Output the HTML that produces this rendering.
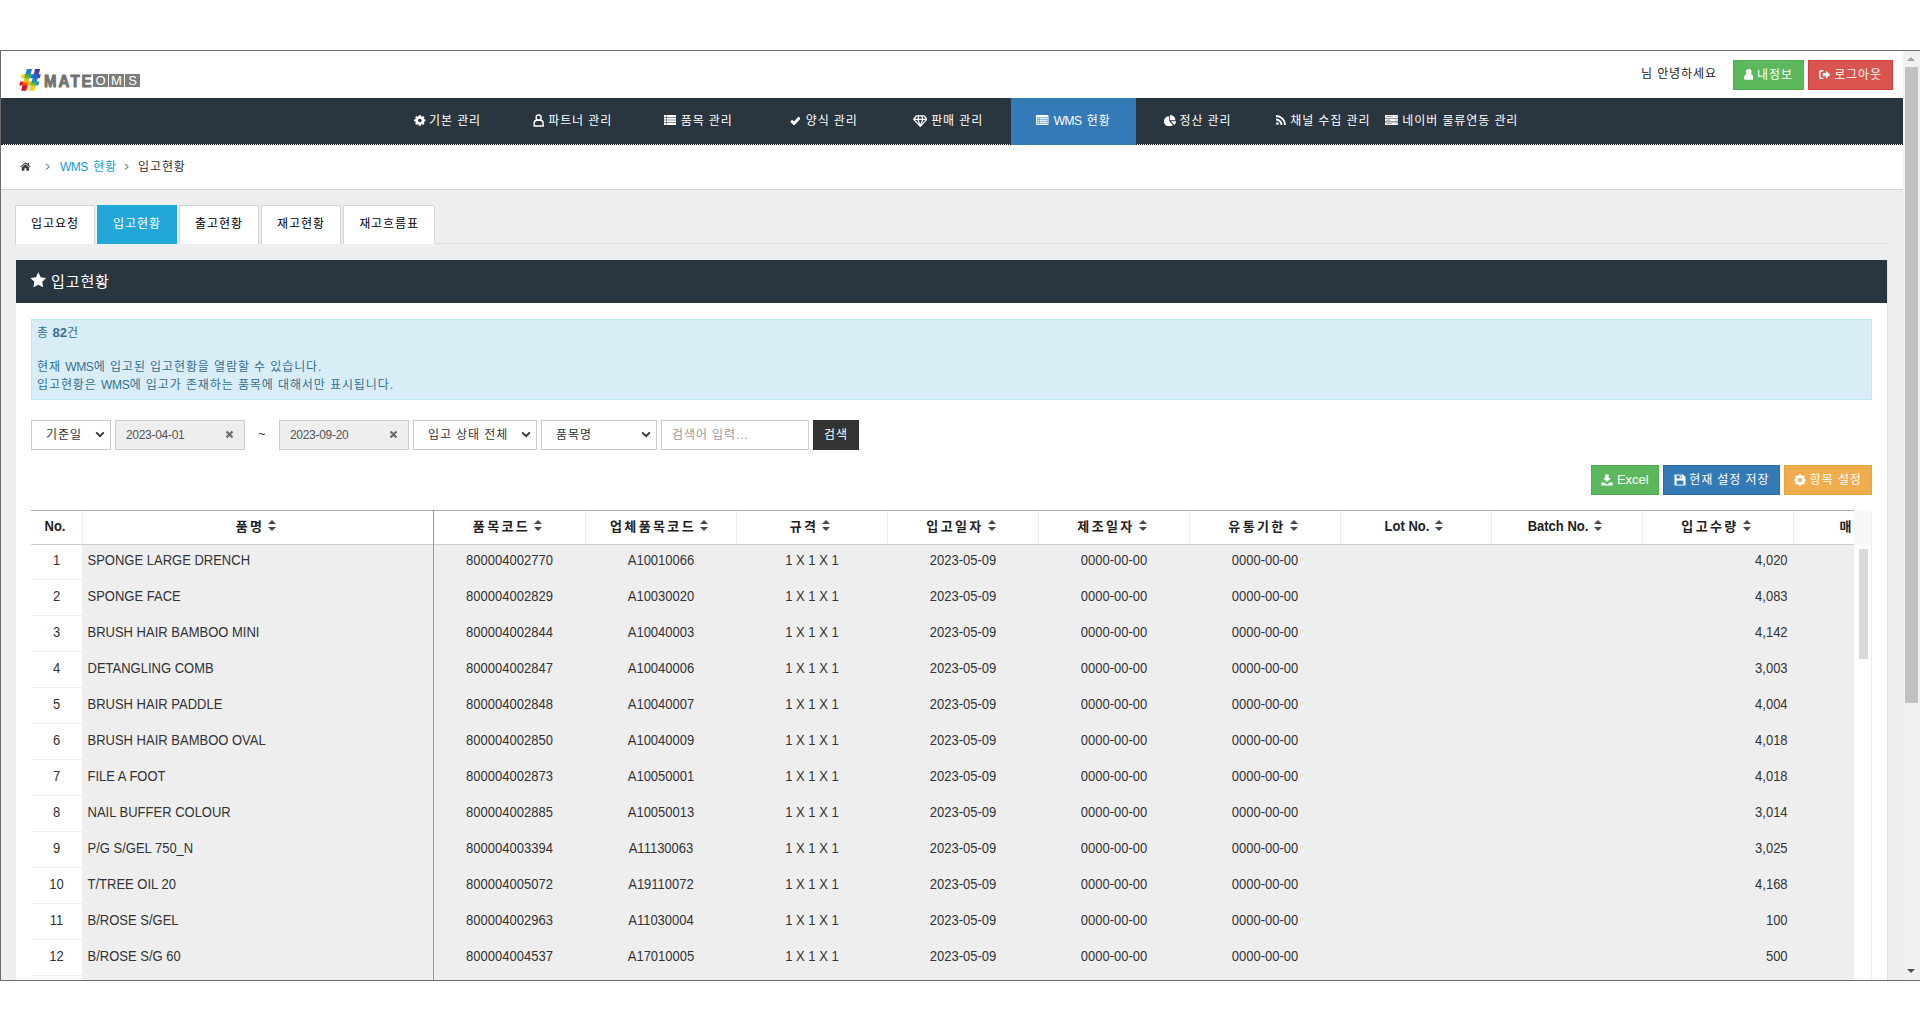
<!DOCTYPE html>
<html lang="ko">
<head>
<meta charset="utf-8">
<title>MATE OMS - 입고현황</title>
<style>
*{box-sizing:border-box;}
html,body{margin:0;padding:0;}
body{width:1920px;height:1031px;background:#fff;position:relative;overflow:hidden;
 font-family:"Liberation Sans","Noto Sans CJK KR",sans-serif;font-size:13px;color:#333;}
.k{font-family:"Liberation Sans","Noto Sans CJK KR",sans-serif;font-weight:400;font-size:12px;letter-spacing:0.9px;}
.k.k15{font-size:15px;letter-spacing:0.9px;}
#frame{position:absolute;left:0;top:50px;width:1920px;height:931px;border:1px solid #6b6b6b;border-right:0;background:#eee;overflow:hidden;}
#page{position:absolute;left:0;top:0;width:1902px;height:929px;background:#eee;overflow:hidden;}
#vsb{position:absolute;left:1902px;top:0;width:17px;height:929px;background:#f1f1f1;}
#vsb .thumb{position:absolute;left:2px;top:16px;width:13px;height:636px;background:#c1c1c1;}
#vsb .up,#vsb .dn{position:absolute;left:4px;width:0;height:0;border-left:4px solid transparent;border-right:4px solid transparent;}
#vsb .up{top:6px;border-bottom:4px solid #a3a3a3;}
#vsb .dn{top:918px;border-top:4px solid #505050;}
.abs{position:absolute;}
/* header */
#hdr{position:absolute;left:0;top:0;width:1902px;height:47px;background:#fff;}
#nav{position:absolute;left:0;top:47px;width:1902px;height:47px;background:#2a363f;background-clip:padding-box;border-bottom:1px dotted #111;}
#nav ul{list-style:none;margin:0;padding:0;position:absolute;left:385px;top:0;height:46px;white-space:nowrap;}
#nav li{float:left;position:relative;width:125px;height:46px;line-height:46px;text-align:left;color:#fff;font-size:13px;white-space:nowrap;}
#nav li.on{background:#337ab7;height:47px;}
#nav li.last{width:132px;}
#nav svg.ni{position:absolute;}
#nav .nt{position:absolute;top:0;white-space:nowrap;}
#bc{position:absolute;left:0;top:94px;width:1902px;height:45px;background:#fff;border-bottom:1px solid #d6d6d6;}
.btn{position:absolute;height:30px;line-height:30px;color:#fff;font-size:13px;text-align:center;white-space:nowrap;margin:0;padding:0;border:0;border-radius:0;font-family:inherit;display:block;}
.btn svg{vertical-align:middle;position:relative;top:-1px;}
/* tabs */
.tab{position:absolute;top:154px;height:39px;line-height:36px;border:1px solid #d4d4d4;border-bottom:0;border-radius:2px 2px 0 0;background:#fff;color:#000;text-align:center;font-size:13px;}
.tab.on{background:#22a7d8;border-color:#22a7d8;color:#fff;box-shadow:0 0 0 1px #e6f7fc;border-radius:0;}
#tabline{position:absolute;left:15px;top:192px;width:1871px;height:1px;background:#ddd;}
#panel{position:absolute;left:15px;top:209px;width:1872px;height:760px;background:#fff;border-right:1px solid #e3e3e3;}
#phead{position:absolute;left:0;top:0;width:1871px;height:43px;background:#2a363f;color:#fff;font-size:16px;line-height:43px;}
#info{position:absolute;left:15px;top:59px;width:1841px;height:81px;background:#d9edf7;border:1px solid #bce8f1;color:#31708f;font-size:13px;}
.fld{position:absolute;top:160px;height:30px;border:1px solid #ccc;background:#fff;font-size:12px;letter-spacing:-0.3px;line-height:28px;color:#333;white-space:nowrap;}
.fld.dis{background:#eee;color:#555;}

.oms{width:15px;height:13px;line-height:14px;background:#7d7d7d;color:#fff;font-size:13px;overflow:hidden;text-align:center;font-family:"Liberation Sans",sans-serif;}
#tbl{position:absolute;left:15px;top:250px;width:1841px;height:520px;overflow:hidden;background:#fff;}
#thead{position:absolute;left:0;top:0;width:1823px;height:35px;border-top:1px solid #aaa;border-bottom:1px solid #ccc;background:#fff;overflow:hidden;}
.th{position:absolute;top:0;height:33px;line-height:32px;padding-right:3px;overflow:hidden;text-align:center;font-weight:bold;font-size:13px;color:#222;border-right:1px solid #eee;white-space:nowrap;}
.kb{font-family:"Liberation Sans","Noto Sans CJK KR",sans-serif;font-weight:bold;letter-spacing:2.4px;margin-right:-2px;}
.t.kb{transform:none;}
.sort{display:inline-block;position:relative;width:8px;height:12px;margin-left:6px;margin-right:1px;vertical-align:middle;top:-2px}
.sort i{position:absolute;left:0;top:0.5px;border-left:4px solid transparent;border-right:4px solid transparent;border-bottom:4.5px solid #4a4a4a;}
.sort b{position:absolute;left:0;top:7.5px;border-left:4px solid transparent;border-right:4px solid transparent;border-top:4.5px solid #4a4a4a;}
#tbody{position:absolute;left:0;top:35px;width:1823px;height:485px;overflow:hidden;background:#eee;}
.tr{position:absolute;left:0;width:1913px;height:36px;}
.td{position:absolute;top:0;height:36px;line-height:31px;padding-right:1px;text-align:center;font-size:13px;color:#333;white-space:nowrap;overflow:hidden;}
.td.no{background:#fff;padding-right:0;}
.td.no::after{content:"";position:absolute;left:1px;right:0;top:34px;height:1px;background:#efefef;}
.td.nm{text-align:left;padding-left:5.5px;}
.t{display:inline-block;transform:scaleY(1.075);transform-origin:50% 62%;}
.td.q{text-align:right;padding-right:6.4px;}
#vline{position:absolute;left:402px;top:0;width:1px;height:520px;background:#999;}
#isb{position:absolute;left:1823px;top:35px;width:17px;height:485px;background:#fff;}
#isbh{position:absolute;left:1823px;top:0;width:17px;height:35px;background:#f8f8f8;}
#tbl{border-right:1px solid #eee;}
#isb div{position:absolute;left:5px;top:4px;width:9px;height:110px;background:#dadada;}
.g{font-size:12px;letter-spacing:-0.5px;margin-right:1px;}
#info .g{font-size:12px;letter-spacing:-0.3px;margin-right:0.3px;}
.gt{display:inline-block;transform:scaleX(0.58);font-size:12px;color:#666;}
.fld input{position:absolute;left:0;top:0;width:100%;height:28px;margin:0;border:0;outline:0;background:transparent;padding:0 0 0 10px;line-height:28px;color:inherit;border-radius:0;}
.fld input.din{font-family:"Liberation Sans","Noto Sans CJK KR",sans-serif;font-size:12px;letter-spacing:-0.3px;}
.fld input.sin::placeholder{color:#999;opacity:1;}
#nav a{color:#fff;text-decoration:none;}
</style>
</head>
<body>
<div id="frame">
<div id="page">
<div id="hdr">
<div class="abs" style="left:18px;top:17px;width:23px;height:24px" role="img" aria-label="#"><svg width="23" height="24" viewBox="0 0 23 24" style=""><defs><linearGradient id="gl" x1="0" y1="0" x2="0" y2="1"><stop offset="0" stop-color="#0d7fd0"/><stop offset="0.2" stop-color="#1787cf"/><stop offset="0.3" stop-color="#55ad33"/><stop offset="0.42" stop-color="#79b82a"/><stop offset="0.5" stop-color="#fbd315"/><stop offset="0.6" stop-color="#f9a51a"/><stop offset="0.7" stop-color="#ee5a1e"/><stop offset="0.8" stop-color="#e2101e"/><stop offset="1" stop-color="#e3061f"/></linearGradient><linearGradient id="gr" x1="0" y1="0" x2="0" y2="1"><stop offset="0" stop-color="#46308f"/><stop offset="0.22" stop-color="#5a3fa8"/><stop offset="0.3" stop-color="#1467c4"/><stop offset="0.55" stop-color="#0e8ccc"/><stop offset="0.66" stop-color="#5fb234"/><stop offset="0.76" stop-color="#a8c526"/><stop offset="0.82" stop-color="#fcd813"/><stop offset="1" stop-color="#fbd011"/></linearGradient><linearGradient id="gu" x1="0" y1="0" x2="1" y2="0"><stop offset="0" stop-color="#f9d71a"/><stop offset="0.15" stop-color="#f4d21c"/><stop offset="0.28" stop-color="#73b72c"/><stop offset="0.42" stop-color="#5fae33"/><stop offset="0.52" stop-color="#1488cf"/><stop offset="0.78" stop-color="#1960c0"/><stop offset="0.88" stop-color="#5a3da6"/><stop offset="1" stop-color="#5a3da6"/></linearGradient><linearGradient id="gd" x1="0" y1="0" x2="1" y2="0"><stop offset="0" stop-color="#e20a1f"/><stop offset="0.14" stop-color="#e31b1f"/><stop offset="0.26" stop-color="#f0641c"/><stop offset="0.38" stop-color="#f08a18"/><stop offset="0.48" stop-color="#fbd116"/><stop offset="0.6" stop-color="#8dbf29"/><stop offset="0.74" stop-color="#5cb035"/><stop offset="0.86" stop-color="#0f90c9"/><stop offset="1" stop-color="#0e86cd"/></linearGradient></defs><polygon points="2.7,6.2 21.9,6.2 20.9,10.2 1.7,10.2" fill="url(#gu)"/><polygon points="1.3,13.6 20.3,13.6 19.3,17.6 0.3,17.6" fill="url(#gd)"/><polygon points="7.9,1.1 13.0,1.1 7.2,22.7 2.1,22.7" fill="url(#gl)"/><polygon points="16.1,1.1 21.1,1.1 15.4,22.7 10.3,22.7" fill="url(#gr)"/></svg></div>
<div class="abs" style="left:42.5px;top:20.6px;height:18px;line-height:18px;font-size:16.4px;font-weight:bold;color:#727272;-webkit-text-stroke:1px #727272;letter-spacing:2.2px;transform:scaleX(0.92);transform-origin:0 50%;white-space:nowrap;font-family:'Liberation Sans',sans-serif">MATE</div>
<div class="abs oms" style="left:92px;top:23px;">O</div><div class="abs oms" style="left:108px;top:23px;">M</div><div class="abs oms" style="left:124px;top:23px;">S</div>
<div class="abs" style="left:1640px;top:14px;height:18px;line-height:18px;color:#222;white-space:nowrap"><span class="k">님 안녕하세요</span></div>
<button type="button" class="btn" style="left:1732px;top:9px;width:71px;background:#5cb85c;border:1px solid #4cae4c;line-height:27px"><svg width="9.4" height="10.8" viewBox="0 0 9.4 10.8" style=""><g fill="#fff"><circle cx="4.7" cy="2.9" r="2.8"/><path d="M0.2 10.8 V8.2 Q0.2 5.6 2.8 5.3 H6.6 Q9.2 5.6 9.2 8.2 V10.8 Z"/></g></svg> <span class="k">내정보</span></button>
<button type="button" class="btn" style="left:1807px;top:9px;width:85px;background:#d9534f;border:1px solid #d43f3a;line-height:27px"><svg width="11.5" height="9.4" viewBox="0 0 11.5 9.4" style=""><g fill="none" stroke="#fff" stroke-width="1.5"><path d="M4.3 0.8 H2.6 Q0.8 0.8 0.8 2.6 V6.8 Q0.8 8.6 2.6 8.6 H4.3"/></g><path d="M3.9 3.1 H7 V0.7 L11.3 4.7 L7 8.7 V6.3 H3.9 Z" fill="#fff"/></svg> <span class="k">로그아웃</span></button>
</div>
<div id="nav"><ul><li class=""><svg class="ni" style="left:28.20px;top:17.00px" width="11.60" height="10.90" viewBox="0 0 14 14" preserveAspectRatio="none"><g fill="#fff"><rect x="5.5" y="0.2" width="3" height="13.6" rx="0.7" transform="rotate(0 7 7)"/><rect x="5.5" y="0.2" width="3" height="13.6" rx="0.7" transform="rotate(45 7 7)"/><rect x="5.5" y="0.2" width="3" height="13.6" rx="0.7" transform="rotate(90 7 7)"/><rect x="5.5" y="0.2" width="3" height="13.6" rx="0.7" transform="rotate(135 7 7)"/><circle cx="7" cy="7" r="5.3"/></g><circle cx="7" cy="7" r="2.1" fill="none" stroke="#000" stroke-opacity="0" /><circle fill="#2a363f" cx="7" cy="7" r="2.2"/></svg><a class="k nt" style="left:43.05px">기본 관리</a></li><li class=""><svg class="ni" style="left:22.30px;top:16.20px" width="11.30" height="12.90" viewBox="0 0 12 13" preserveAspectRatio="none"><g fill="none" stroke="#fff" stroke-width="1.5"><circle cx="6" cy="3.6" r="2.7"/><path d="M1.2 12.2 V9.6 Q1.2 6.6 4 6.4 H8 Q10.8 6.6 10.8 9.6 V12.2 Z" stroke-linejoin="round"/></g></svg><a class="k nt" style="left:37.20px">파트너 관리</a></li><li class=""><svg class="ni" style="left:28.00px;top:17.20px" width="12.25" height="10.00" viewBox="0 0 12.25 10" preserveAspectRatio="none"><g fill="#fff"><rect x="0" y="0" width="12.25" height="2.1"/><rect x="0" y="2.63" width="12.25" height="2.1"/><rect x="0" y="5.26" width="12.25" height="2.1"/><rect x="0" y="7.9" width="12.25" height="2.1"/></g><rect x="2.3" y="0" width="0.55" height="10" fill="#2a363f" opacity="0.75"/></svg><a class="k nt" style="left:44.70px">품목 관리</a></li><li class=""><svg class="ni" style="left:28.60px;top:18.40px" width="10.80" height="9.00" viewBox="0 0 11 9" preserveAspectRatio="none"><path d="M1.2 4.7 L4.2 7.5 L9.8 1.5" fill="none" stroke="#fff" stroke-width="2.9"/></svg><a class="k nt" style="left:44.70px">양식 관리</a></li><li class=""><svg class="ni" style="left:26.90px;top:16.80px" width="14.60" height="12.00" viewBox="0 0 14 12" preserveAspectRatio="none"><g fill="none" stroke="#fff" stroke-width="1.2" stroke-linejoin="round"><path d="M3.2 0.8 H10.8 L13.3 4.3 L7 11.3 L0.7 4.3 Z"/><path d="M0.7 4.3 H13.3 M4.6 4.3 L7 11 L9.4 4.3 M4.6 4.3 L5.6 0.8 M9.4 4.3 L8.4 0.8"/></g></svg><a class="k nt" style="left:45.15px">판매 관리</a></li><li class="on"><svg class="ni" style="left:25.25px;top:17.00px" width="12.50" height="10.00" viewBox="0 0 12.5 10" preserveAspectRatio="none"><rect x="0" y="0" width="12.5" height="10" rx="1.1" fill="#fff"/><rect x="0.9" y="2.2" width="10.7" height="6.9" fill="#6ea3d6"/><g fill="#e6f0fa"><rect x="1.7" y="3" width="1.4" height="1.3"/><rect x="3.9" y="3" width="6.9" height="1.3"/><rect x="1.7" y="5" width="1.4" height="1.3"/><rect x="3.9" y="5" width="6.9" height="1.3"/><rect x="1.7" y="7" width="1.4" height="1.3"/><rect x="3.9" y="7" width="6.9" height="1.3"/></g></svg><a class="k nt" style="left:42.65px"><span class="g">WMS</span> 현황</a></li><li class=""><svg class="ni" style="left:27.75px;top:16.60px" width="12.05" height="11.40" viewBox="0 0 12 11.4" preserveAspectRatio="none"><g fill="#fff"><path d="M5.2 1.2 V6.3 L8.8 9.9 A5.15 5.15 0 1 1 5.2 1.2 Z"/><path d="M6.1 0 A5.3 5.3 0 0 1 11.4 5.3 H6.1 Z"/><path d="M6.7 6.2 H12 A5.3 5.3 0 0 1 10.4 9.9 Z"/></g></svg><a class="k nt" style="left:43.45px">정산 관리</a></li><li class=""><svg class="ni" style="left:14.80px;top:17.20px" width="10.00" height="10.00" viewBox="0 0 10 10" preserveAspectRatio="none"><g fill="none" stroke="#fff" stroke-width="1.9"><path d="M0 0.95 A9.05 9.05 0 0 1 9.05 10"/><path d="M0 4.5 A5.5 5.5 0 0 1 5.5 10"/></g><circle cx="1.4" cy="8.6" r="1.4" fill="#fff"/></svg><a class="k nt" style="left:29.25px">채널 수집 관리</a></li><li class="last"><svg class="ni" style="left:-1.00px;top:17.00px" width="12.90" height="10.20" viewBox="0 0 13 10.2" preserveAspectRatio="none"><g fill="#fff"><rect x="0" y="0" width="13" height="3" rx="0.6"/><rect x="0" y="3.6" width="13" height="3" rx="0.6"/><rect x="0" y="7.2" width="13" height="3" rx="0.6"/></g><g fill="#2a363f" opacity="0.55"><rect x="1" y="1.1" width="7" height="0.8"/><rect x="10.3" y="1.1" width="1.4" height="0.8"/><rect x="1" y="4.7" width="5" height="0.8"/><rect x="10.3" y="4.7" width="1.4" height="0.8"/><rect x="1" y="8.3" width="6" height="0.8"/><rect x="10.3" y="8.3" width="1.4" height="0.8"/></g></svg><a class="k nt" style="left:16.35px">네이버 물류연동 관리</a></li></ul></div>
<div id="bc">
<div class="abs" style="left:19.2px;top:17.2px;line-height:0"><svg preserveAspectRatio="none" width="10.8" height="8.9" viewBox="0 0.4 12 10.3" style=""><g fill="#3d3d3d"><path d="M6 0.6 L0.2 5.6 L0.9 6.4 L6 2.1 L11.1 6.4 L11.8 5.6 L9.9 4 V1.2 H8.5 V2.7 Z"/><path d="M6 3.1 L1.9 6.5 V10.6 H4.9 V7.6 H7.1 V10.6 H10.1 V6.5 Z"/></g></svg></div>
<div class="abs" style="left:43px;top:13px;line-height:18px;color:#555;font-size:12px"><span class="gt">&gt;</span></div>
<div class="abs" style="left:59px;top:13px;line-height:18px;color:#2399cb;white-space:nowrap"><span class="k"><span class="g">WMS</span> 현황</span></div>
<div class="abs" style="left:122px;top:13px;line-height:18px;color:#555;font-size:12px"><span class="gt">&gt;</span></div>
<div class="abs" style="left:137px;top:13px;line-height:18px;color:#333;white-space:nowrap"><span class="k">입고현황</span></div>
</div>
<div id="tabline"></div><div class="tab " style="left:14px;width:80px"><span class="k">입고요청</span></div><div class="tab on" style="left:96px;width:80px"><span class="k">입고현황</span></div><div class="tab " style="left:178px;width:80px"><span class="k">출고현황</span></div><div class="tab " style="left:260px;width:80px"><span class="k">재고현황</span></div><div class="tab " style="left:342px;width:92px"><span class="k">재고흐름표</span></div>
<div id="panel">
<div id="phead"><span class="abs" style="left:14.3px;top:0"><svg width="16.6" height="15.6" viewBox="0 0 16 15" style="vertical-align:middle;position:relative;top:-3px"><path d="M8 0.3 L10.3 5.1 L15.6 5.8 L11.8 9.5 L12.7 14.7 L8 12.2 L3.3 14.7 L4.2 9.5 L0.4 5.8 L5.7 5.1 Z" fill="#fff"/></svg></span><span class="k k15 abs" style="left:35px;top:0;white-space:nowrap">입고현황</span></div>
<div id="info">
<div class="abs" style="left:5px;top:4px;line-height:18px;white-space:nowrap"><span class="k">총</span> <b>82</b><span class="k">건</span></div>
<div class="abs" style="left:5px;top:38px;line-height:18px;white-space:nowrap"><span class="k">현재 <span class="g">WMS</span>에 입고된 입고현황을 열람할 수 있습니다.</span></div>
<div class="abs" style="left:5px;top:56px;line-height:18px;white-space:nowrap"><span class="k">입고현황은 <span class="g">WMS</span>에 입고가 존재하는 품목에 대해서만 표시됩니다.</span></div>
</div>
<div class="fld" role="combobox" aria-label="기준일" style="left:15px;width:80px"><span class="k" style="position:absolute;left:14px;top:0">기준일</span><span style="position:absolute;right:5px;top:-1px"><svg width="10" height="7" viewBox="0 0 10 7" style=""><path d="M1.2 1.4 L5 5.2 L8.8 1.4" stroke="#333" stroke-width="1.9" fill="none"/></svg></span></div>
<div class="fld dis" style="left:99px;width:130px"><input class="din" type="text" readonly value="2023-04-01"><span style="position:absolute;right:10px;top:0px"><svg width="9" height="9" viewBox="0 0 9 9" style=""><path d="M1.5 1.5 L7.5 7.5 M7.5 1.5 L1.5 7.5" stroke="#6a6a6a" stroke-width="2.2" fill="none"/></svg></span></div>
<div class="abs" style="left:242px;top:160px;height:30px;line-height:28px;color:#333">~</div>
<div class="fld dis" style="left:263px;width:130px"><input class="din" type="text" readonly value="2023-09-20"><span style="position:absolute;right:10px;top:0px"><svg width="9" height="9" viewBox="0 0 9 9" style=""><path d="M1.5 1.5 L7.5 7.5 M7.5 1.5 L1.5 7.5" stroke="#6a6a6a" stroke-width="2.2" fill="none"/></svg></span></div>
<div class="fld" role="combobox" aria-label="입고 상태 전체" style="left:397px;width:124px"><span class="k" style="position:absolute;left:14px;top:0">입고 상태 전체</span><span style="position:absolute;right:5px;top:-1px"><svg width="10" height="7" viewBox="0 0 10 7" style=""><path d="M1.2 1.4 L5 5.2 L8.8 1.4" stroke="#333" stroke-width="1.9" fill="none"/></svg></span></div>
<div class="fld" role="combobox" aria-label="품목명" style="left:525px;width:116px"><span class="k" style="position:absolute;left:14px;top:0">품목명</span><span style="position:absolute;right:5px;top:-1px"><svg width="10" height="7" viewBox="0 0 10 7" style=""><path d="M1.2 1.4 L5 5.2 L8.8 1.4" stroke="#333" stroke-width="1.9" fill="none"/></svg></span></div>
<div class="fld" style="left:645px;width:148px"><input class="k sin" type="text" placeholder="검색어 입력..."></div>
<button type="button" class="btn" style="left:797px;top:160px;width:46px;background:#333"><span class="k">검색</span></button>
<button type="button" class="btn" style="left:1575px;top:205px;width:68px;background:#5cb85c;border:1px solid #4cae4c;line-height:28px"><svg width="12" height="12" viewBox="0 0 12 12" style=""><g fill="#fff"><path d="M4.3 0.4 H7.7 V4 H10 L6 8 L2 4 H4.3 Z"/><path d="M0.3 8.4 H3.4 L4.8 9.8 Q6 10.9 7.2 9.8 L8.6 8.4 H11.7 V11.6 H0.3 Z"/></g></svg> Excel</button>
<button type="button" class="btn" style="left:1647px;top:205px;width:117px;background:#337ab7;border:1px solid #2e6da4;line-height:28px"><svg width="12" height="12" viewBox="0 0 12 12" style=""><path d="M0.5 1.3 Q0.5 0.5 1.3 0.5 H9 L11.5 3 V10.7 Q11.5 11.5 10.7 11.5 H1.3 Q0.5 11.5 0.5 10.7 Z" fill="#fff"/><rect x="2.6" y="1.5" width="5" height="3" fill="#337ab7"/><rect x="5.7" y="1.9" width="1.2" height="2.1" fill="#fff"/><rect x="2.6" y="6.6" width="6.8" height="4" fill="#337ab7"/></svg> <span class="k">현재 설정 저장</span></button>
<button type="button" class="btn" style="left:1768px;top:205px;width:88px;background:#f0ad4e;border:1px solid #eea236;line-height:28px"><svg width="12" height="12" viewBox="0 0 14 14" style=""><g fill="#fff"><rect x="5.5" y="0.2" width="3" height="13.6" rx="0.7" transform="rotate(0 7 7)"/><rect x="5.5" y="0.2" width="3" height="13.6" rx="0.7" transform="rotate(45 7 7)"/><rect x="5.5" y="0.2" width="3" height="13.6" rx="0.7" transform="rotate(90 7 7)"/><rect x="5.5" y="0.2" width="3" height="13.6" rx="0.7" transform="rotate(135 7 7)"/><circle cx="7" cy="7" r="5.3"/></g><circle cx="7" cy="7" r="2.1" fill="none" stroke="#000" stroke-opacity="0" /><circle fill="#f0ad4e" cx="7" cy="7" r="2.2"/></svg> <span class="k">항목 설정</span></button>
<div id="tbl" role="table"><div id="thead" role="row"><div class="th" role="columnheader" style="left:0px;width:52px"><span class="t ">No.</span></div><div class="th" role="columnheader" style="left:52px;width:351px"><span class="t kb">품명</span><span class="sort"><i></i><b></b></span></div><div class="th" role="columnheader" style="left:403px;width:152px"><span class="t kb">품목코드</span><span class="sort"><i></i><b></b></span></div><div class="th" role="columnheader" style="left:555px;width:151px"><span class="t kb">업체품목코드</span><span class="sort"><i></i><b></b></span></div><div class="th" role="columnheader" style="left:706px;width:151px"><span class="t kb">규격</span><span class="sort"><i></i><b></b></span></div><div class="th" role="columnheader" style="left:857px;width:151px"><span class="t kb">입고일자</span><span class="sort"><i></i><b></b></span></div><div class="th" role="columnheader" style="left:1008px;width:151px"><span class="t kb">제조일자</span><span class="sort"><i></i><b></b></span></div><div class="th" role="columnheader" style="left:1159px;width:151px"><span class="t kb">유통기한</span><span class="sort"><i></i><b></b></span></div><div class="th" role="columnheader" style="left:1310px;width:151px"><span class="t ">Lot No.</span><span class="sort"><i></i><b></b></span></div><div class="th" role="columnheader" style="left:1461px;width:151px"><span class="t ">Batch No.</span><span class="sort"><i></i><b></b></span></div><div class="th" role="columnheader" style="left:1612px;width:151px"><span class="t kb">입고수량</span><span class="sort"><i></i><b></b></span></div><div class="th" role="columnheader" style="left:1763px;width:58px;text-align:left;padding-left:45.5px;padding-right:0;border-right:0"><span class="t kb last">매</span></div></div><div id="tbody"><div class="tr" role="row" style="top:0px"><div role="cell" class="td no" style="left:0;width:51px"><span class="t">1</span></div><div role="cell" class="td nm" style="left:51px;width:352px"><span class="t">SPONGE LARGE DRENCH</span></div><div role="cell" class="td" style="left:403px;width:152px"><span class="t">800004002770</span></div><div role="cell" class="td" style="left:555px;width:151px"><span class="t">A10010066</span></div><div role="cell" class="td" style="left:706px;width:151px"><span class="t">1 X 1 X 1</span></div><div role="cell" class="td" style="left:857px;width:151px"><span class="t">2023-05-09</span></div><div role="cell" class="td" style="left:1008px;width:151px"><span class="t">0000-00-00</span></div><div role="cell" class="td" style="left:1159px;width:151px"><span class="t">0000-00-00</span></div><div role="cell" class="td" style="left:1310px;width:151px"><span class="t"></span></div><div role="cell" class="td" style="left:1461px;width:151px"><span class="t"></span></div><div role="cell" class="td q" style="left:1612px;width:151px"><span class="t">4,020</span></div></div><div class="tr" role="row" style="top:36px"><div role="cell" class="td no" style="left:0;width:51px"><span class="t">2</span></div><div role="cell" class="td nm" style="left:51px;width:352px"><span class="t">SPONGE FACE</span></div><div role="cell" class="td" style="left:403px;width:152px"><span class="t">800004002829</span></div><div role="cell" class="td" style="left:555px;width:151px"><span class="t">A10030020</span></div><div role="cell" class="td" style="left:706px;width:151px"><span class="t">1 X 1 X 1</span></div><div role="cell" class="td" style="left:857px;width:151px"><span class="t">2023-05-09</span></div><div role="cell" class="td" style="left:1008px;width:151px"><span class="t">0000-00-00</span></div><div role="cell" class="td" style="left:1159px;width:151px"><span class="t">0000-00-00</span></div><div role="cell" class="td" style="left:1310px;width:151px"><span class="t"></span></div><div role="cell" class="td" style="left:1461px;width:151px"><span class="t"></span></div><div role="cell" class="td q" style="left:1612px;width:151px"><span class="t">4,083</span></div></div><div class="tr" role="row" style="top:72px"><div role="cell" class="td no" style="left:0;width:51px"><span class="t">3</span></div><div role="cell" class="td nm" style="left:51px;width:352px"><span class="t">BRUSH HAIR BAMBOO MINI</span></div><div role="cell" class="td" style="left:403px;width:152px"><span class="t">800004002844</span></div><div role="cell" class="td" style="left:555px;width:151px"><span class="t">A10040003</span></div><div role="cell" class="td" style="left:706px;width:151px"><span class="t">1 X 1 X 1</span></div><div role="cell" class="td" style="left:857px;width:151px"><span class="t">2023-05-09</span></div><div role="cell" class="td" style="left:1008px;width:151px"><span class="t">0000-00-00</span></div><div role="cell" class="td" style="left:1159px;width:151px"><span class="t">0000-00-00</span></div><div role="cell" class="td" style="left:1310px;width:151px"><span class="t"></span></div><div role="cell" class="td" style="left:1461px;width:151px"><span class="t"></span></div><div role="cell" class="td q" style="left:1612px;width:151px"><span class="t">4,142</span></div></div><div class="tr" role="row" style="top:108px"><div role="cell" class="td no" style="left:0;width:51px"><span class="t">4</span></div><div role="cell" class="td nm" style="left:51px;width:352px"><span class="t">DETANGLING COMB</span></div><div role="cell" class="td" style="left:403px;width:152px"><span class="t">800004002847</span></div><div role="cell" class="td" style="left:555px;width:151px"><span class="t">A10040006</span></div><div role="cell" class="td" style="left:706px;width:151px"><span class="t">1 X 1 X 1</span></div><div role="cell" class="td" style="left:857px;width:151px"><span class="t">2023-05-09</span></div><div role="cell" class="td" style="left:1008px;width:151px"><span class="t">0000-00-00</span></div><div role="cell" class="td" style="left:1159px;width:151px"><span class="t">0000-00-00</span></div><div role="cell" class="td" style="left:1310px;width:151px"><span class="t"></span></div><div role="cell" class="td" style="left:1461px;width:151px"><span class="t"></span></div><div role="cell" class="td q" style="left:1612px;width:151px"><span class="t">3,003</span></div></div><div class="tr" role="row" style="top:144px"><div role="cell" class="td no" style="left:0;width:51px"><span class="t">5</span></div><div role="cell" class="td nm" style="left:51px;width:352px"><span class="t">BRUSH HAIR PADDLE</span></div><div role="cell" class="td" style="left:403px;width:152px"><span class="t">800004002848</span></div><div role="cell" class="td" style="left:555px;width:151px"><span class="t">A10040007</span></div><div role="cell" class="td" style="left:706px;width:151px"><span class="t">1 X 1 X 1</span></div><div role="cell" class="td" style="left:857px;width:151px"><span class="t">2023-05-09</span></div><div role="cell" class="td" style="left:1008px;width:151px"><span class="t">0000-00-00</span></div><div role="cell" class="td" style="left:1159px;width:151px"><span class="t">0000-00-00</span></div><div role="cell" class="td" style="left:1310px;width:151px"><span class="t"></span></div><div role="cell" class="td" style="left:1461px;width:151px"><span class="t"></span></div><div role="cell" class="td q" style="left:1612px;width:151px"><span class="t">4,004</span></div></div><div class="tr" role="row" style="top:180px"><div role="cell" class="td no" style="left:0;width:51px"><span class="t">6</span></div><div role="cell" class="td nm" style="left:51px;width:352px"><span class="t">BRUSH HAIR BAMBOO OVAL</span></div><div role="cell" class="td" style="left:403px;width:152px"><span class="t">800004002850</span></div><div role="cell" class="td" style="left:555px;width:151px"><span class="t">A10040009</span></div><div role="cell" class="td" style="left:706px;width:151px"><span class="t">1 X 1 X 1</span></div><div role="cell" class="td" style="left:857px;width:151px"><span class="t">2023-05-09</span></div><div role="cell" class="td" style="left:1008px;width:151px"><span class="t">0000-00-00</span></div><div role="cell" class="td" style="left:1159px;width:151px"><span class="t">0000-00-00</span></div><div role="cell" class="td" style="left:1310px;width:151px"><span class="t"></span></div><div role="cell" class="td" style="left:1461px;width:151px"><span class="t"></span></div><div role="cell" class="td q" style="left:1612px;width:151px"><span class="t">4,018</span></div></div><div class="tr" role="row" style="top:216px"><div role="cell" class="td no" style="left:0;width:51px"><span class="t">7</span></div><div role="cell" class="td nm" style="left:51px;width:352px"><span class="t">FILE A FOOT</span></div><div role="cell" class="td" style="left:403px;width:152px"><span class="t">800004002873</span></div><div role="cell" class="td" style="left:555px;width:151px"><span class="t">A10050001</span></div><div role="cell" class="td" style="left:706px;width:151px"><span class="t">1 X 1 X 1</span></div><div role="cell" class="td" style="left:857px;width:151px"><span class="t">2023-05-09</span></div><div role="cell" class="td" style="left:1008px;width:151px"><span class="t">0000-00-00</span></div><div role="cell" class="td" style="left:1159px;width:151px"><span class="t">0000-00-00</span></div><div role="cell" class="td" style="left:1310px;width:151px"><span class="t"></span></div><div role="cell" class="td" style="left:1461px;width:151px"><span class="t"></span></div><div role="cell" class="td q" style="left:1612px;width:151px"><span class="t">4,018</span></div></div><div class="tr" role="row" style="top:252px"><div role="cell" class="td no" style="left:0;width:51px"><span class="t">8</span></div><div role="cell" class="td nm" style="left:51px;width:352px"><span class="t">NAIL BUFFER COLOUR</span></div><div role="cell" class="td" style="left:403px;width:152px"><span class="t">800004002885</span></div><div role="cell" class="td" style="left:555px;width:151px"><span class="t">A10050013</span></div><div role="cell" class="td" style="left:706px;width:151px"><span class="t">1 X 1 X 1</span></div><div role="cell" class="td" style="left:857px;width:151px"><span class="t">2023-05-09</span></div><div role="cell" class="td" style="left:1008px;width:151px"><span class="t">0000-00-00</span></div><div role="cell" class="td" style="left:1159px;width:151px"><span class="t">0000-00-00</span></div><div role="cell" class="td" style="left:1310px;width:151px"><span class="t"></span></div><div role="cell" class="td" style="left:1461px;width:151px"><span class="t"></span></div><div role="cell" class="td q" style="left:1612px;width:151px"><span class="t">3,014</span></div></div><div class="tr" role="row" style="top:288px"><div role="cell" class="td no" style="left:0;width:51px"><span class="t">9</span></div><div role="cell" class="td nm" style="left:51px;width:352px"><span class="t">P/G S/GEL 750_N</span></div><div role="cell" class="td" style="left:403px;width:152px"><span class="t">800004003394</span></div><div role="cell" class="td" style="left:555px;width:151px"><span class="t">A11130063</span></div><div role="cell" class="td" style="left:706px;width:151px"><span class="t">1 X 1 X 1</span></div><div role="cell" class="td" style="left:857px;width:151px"><span class="t">2023-05-09</span></div><div role="cell" class="td" style="left:1008px;width:151px"><span class="t">0000-00-00</span></div><div role="cell" class="td" style="left:1159px;width:151px"><span class="t">0000-00-00</span></div><div role="cell" class="td" style="left:1310px;width:151px"><span class="t"></span></div><div role="cell" class="td" style="left:1461px;width:151px"><span class="t"></span></div><div role="cell" class="td q" style="left:1612px;width:151px"><span class="t">3,025</span></div></div><div class="tr" role="row" style="top:324px"><div role="cell" class="td no" style="left:0;width:51px"><span class="t">10</span></div><div role="cell" class="td nm" style="left:51px;width:352px"><span class="t">T/TREE OIL 20</span></div><div role="cell" class="td" style="left:403px;width:152px"><span class="t">800004005072</span></div><div role="cell" class="td" style="left:555px;width:151px"><span class="t">A19110072</span></div><div role="cell" class="td" style="left:706px;width:151px"><span class="t">1 X 1 X 1</span></div><div role="cell" class="td" style="left:857px;width:151px"><span class="t">2023-05-09</span></div><div role="cell" class="td" style="left:1008px;width:151px"><span class="t">0000-00-00</span></div><div role="cell" class="td" style="left:1159px;width:151px"><span class="t">0000-00-00</span></div><div role="cell" class="td" style="left:1310px;width:151px"><span class="t"></span></div><div role="cell" class="td" style="left:1461px;width:151px"><span class="t"></span></div><div role="cell" class="td q" style="left:1612px;width:151px"><span class="t">4,168</span></div></div><div class="tr" role="row" style="top:360px"><div role="cell" class="td no" style="left:0;width:51px"><span class="t">11</span></div><div role="cell" class="td nm" style="left:51px;width:352px"><span class="t">B/ROSE S/GEL</span></div><div role="cell" class="td" style="left:403px;width:152px"><span class="t">800004002963</span></div><div role="cell" class="td" style="left:555px;width:151px"><span class="t">A11030004</span></div><div role="cell" class="td" style="left:706px;width:151px"><span class="t">1 X 1 X 1</span></div><div role="cell" class="td" style="left:857px;width:151px"><span class="t">2023-05-09</span></div><div role="cell" class="td" style="left:1008px;width:151px"><span class="t">0000-00-00</span></div><div role="cell" class="td" style="left:1159px;width:151px"><span class="t">0000-00-00</span></div><div role="cell" class="td" style="left:1310px;width:151px"><span class="t"></span></div><div role="cell" class="td" style="left:1461px;width:151px"><span class="t"></span></div><div role="cell" class="td q" style="left:1612px;width:151px"><span class="t">100</span></div></div><div class="tr" role="row" style="top:396px"><div role="cell" class="td no" style="left:0;width:51px"><span class="t">12</span></div><div role="cell" class="td nm" style="left:51px;width:352px"><span class="t">B/ROSE S/G 60</span></div><div role="cell" class="td" style="left:403px;width:152px"><span class="t">800004004537</span></div><div role="cell" class="td" style="left:555px;width:151px"><span class="t">A17010005</span></div><div role="cell" class="td" style="left:706px;width:151px"><span class="t">1 X 1 X 1</span></div><div role="cell" class="td" style="left:857px;width:151px"><span class="t">2023-05-09</span></div><div role="cell" class="td" style="left:1008px;width:151px"><span class="t">0000-00-00</span></div><div role="cell" class="td" style="left:1159px;width:151px"><span class="t">0000-00-00</span></div><div role="cell" class="td" style="left:1310px;width:151px"><span class="t"></span></div><div role="cell" class="td" style="left:1461px;width:151px"><span class="t"></span></div><div role="cell" class="td q" style="left:1612px;width:151px"><span class="t">500</span></div></div><div class="tr" role="row" style="top:432px"><div role="cell" class="td no" style="left:0;width:51px"></div></div></div><div id="vline"></div><div id="isbh"></div><div id="isb"><div></div></div></div>
</div>
</div>
<div id="vsb"><div class="up"></div><div class="thumb"></div><div class="dn"></div></div>
</div>
</body>
</html>
